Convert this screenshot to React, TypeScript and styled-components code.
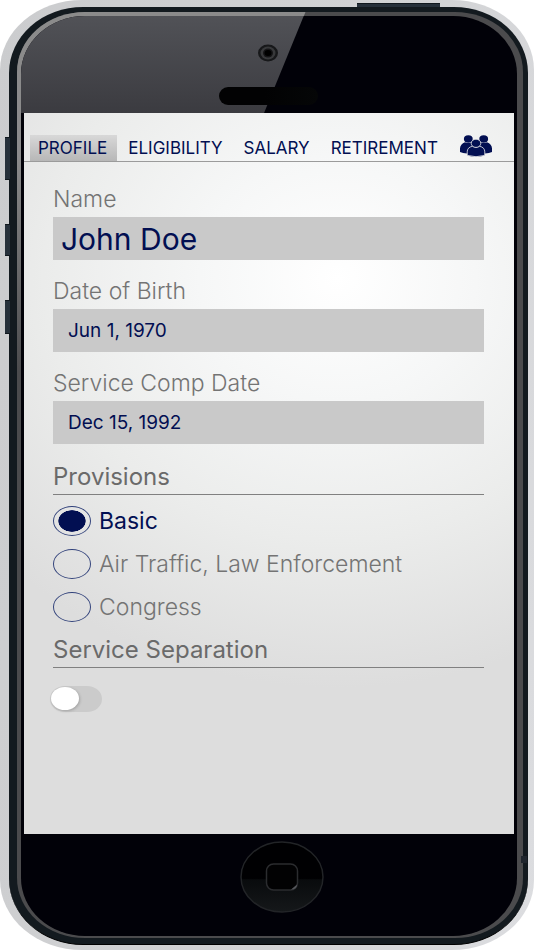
import React, { useState } from "react";
import styled, { createGlobalStyle } from "styled-components";

const navy = "#020f52";
const grey = "#747474";

const GlobalStyle = createGlobalStyle`
  *, *::before, *::after { box-sizing: border-box; }
  body { margin: 0; background: #fff; font-family: Inter, "Liberation Sans", sans-serif; }
  button, input { font: inherit; }
`;

const Shell = styled.main`
  position: relative;
  display: flex;
  min-height: 100vh;
  padding: 7px 6px 5px 9px;
  border-radius: 82px / 70px;
  background: linear-gradient(100deg, #cbccce, #d2d3d5 60%, #dcdde0);
`;

const Band = styled.div`
  display: flex;
  flex: 1;
  min-width: 0;
  padding: 5px 5px 6px 8px;
  border-radius: 74px / 66px;
  background: #131a1f;
  border-bottom: 1px solid #000;
`;

const Rail = styled.div`
  position: relative;
  display: flex;
  flex: 1;
  min-width: 0;
  padding: 4px 6px 2px 4px;
  border-radius: 68px / 60px;
  background: #4b4b4d;
  overflow: hidden;

  &::before {
    content: "";
    position: absolute;
    inset: 0 0 auto 0;
    height: 360px;
    background: linear-gradient(#8b8b8b 40%, transparent);
    clip-path: polygon(0 0, 57% 0, 30% 100%, 0 100%);
  }
`;

const Face = styled.div`
  position: relative;
  display: flex;
  flex: 1;
  flex-direction: column;
  min-width: 0;
  border-radius: 64px / 58px;
  background: #010108;
  overflow: hidden;
`;

const Forehead = styled.div`
  position: relative;
  display: flex;
  flex-direction: column;
  align-items: center;
  gap: 25px;
  height: 97px;
  padding: 28px 2px 0 0;

  &::before {
    content: "";
    position: absolute;
    inset: 0;
    background: linear-gradient(#515257, #3b3b40);
    clip-path: polygon(0 0, 57% 0, 49% 100%, 0 100%);
  }
`;

const Camera = styled.svg`
  position: relative;
  width: 20px;
  height: 18px;
  flex: none;
`;

const Speaker = styled.div`
  position: relative;
  width: 99px;
  height: 18px;
  border-radius: 9px;
  background: linear-gradient(90deg, #020203 45%, #050607);
`;

const Screen = styled.div`
  flex: 1;
  margin: 0 3px;
  background: radial-gradient(460px 410px at 64% 165px, #fff 0, #f6f7f7 30%, #ebeceb 64%, #ddd 100%);
`;

const Tabs = styled.nav`
  display: flex;
  align-items: flex-end;
  gap: 3px;
  height: 49px;
  padding: 0 18px 0 6px;
  border-bottom: 1px solid #9b9b9b;
`;

const Tab = styled.button<{ $active: boolean }>`
  height: 26px;
  padding: 0 10px 0 8px;
  border: 0;
  background: ${(p) => (p.$active ? "linear-gradient(#d8d8d8, #b7b7b7)" : "none")};
  color: ${navy};
  font-size: 17px;
  line-height: 24px;
  white-space: nowrap;
  cursor: pointer;
`;

const IconButton = styled.button`
  display: flex;
  padding: 0 4px;
  margin: 0 0 4px auto;
  border: 0;
  background: none;
  cursor: pointer;
`;

const Form = styled.form`
  display: flex;
  flex-direction: column;
  padding: 24px 30px 24px 29px;
`;

const Field = styled.div`
  display: flex;
  flex-direction: column;
  gap: 5px;
  margin-bottom: 18px;
`;

const Label = styled.label`
  color: ${grey};
  font-size: 23px;
  font-weight: 300;
  line-height: 26px;
`;

const TextInput = styled.input<{ $large?: boolean }>`
  width: 100%;
  height: 43px;
  padding: 0 ${(p) => (p.$large ? 8 : 15)}px;
  border: 0;
  border-radius: 0;
  background: #c9c9c9;
  color: ${navy};
  font-size: ${(p) => (p.$large ? 30 : 19)}px;
`;

const Group = styled.fieldset`
  min-width: 0;
  margin: 0 0 7px;
  padding: 0;
  border: 0;
`;

const Legend = styled.legend`
  width: 100%;
  margin-bottom: 4px;
  padding: 0 0 2px;
  border-bottom: 1px solid #808080;
  color: #6a6a6a;
  font-size: 24px;
  line-height: 30px;
`;

const Option = styled.label<{ $on: boolean }>`
  display: flex;
  align-items: center;
  gap: 8px;
  height: 43px;
  color: ${(p) => (p.$on ? navy : grey)};
  font-size: 23px;
  font-weight: ${(p) => (p.$on ? 400 : 300)};
  white-space: nowrap;
`;

const Radio = styled.input`
  appearance: none;
  flex: none;
  width: 38px;
  height: 30px;
  margin: 0;
  padding: 3px 4px;
  border: 1px solid #34447c;
  border-radius: 50%;

  &:checked {
    background: radial-gradient(closest-side, ${navy} 95%, transparent) content-box no-repeat;
  }
`;

const Switch = styled.input`
  appearance: none;
  width: 52px;
  height: 26px;
  margin: 14px 0 0 -3px;
  padding: 1px;
  border-radius: 15px / 13px;
  background: #cbcbcb;
  cursor: pointer;

  &::before {
    content: "";
    display: block;
    width: 28px;
    height: 23px;
    border-radius: 50%;
    background: #fff;
    box-shadow: 1px 1px 3px rgba(0, 0, 0, 0.2);
  }

  &:checked::before {
    margin-left: 22px;
  }
`;

const Chin = styled.div`
  display: flex;
  justify-content: center;
  height: 102px;
  padding: 6px 0 0 26px;
`;

const Home = styled.button`
  width: 86px;
  height: 74px;
  padding: 0;
  border: 0;
  background: none;
`;

const SideKey = styled.span<{ $top: number; $height: number }>`
  position: absolute;
  left: 5px;
  top: ${(p) => p.$top}px;
  width: 5px;
  height: ${(p) => p.$height}px;
  border-top: 1px solid #11181e;
  border-bottom: 1px solid #11181e;
  background: #26303a;
`;

const PowerKey = styled.span`
  position: absolute;
  top: 3px;
  right: 94px;
  width: 83px;
  height: 4px;
  border-top: 1px solid #11181e;
  background: #26303a;
`;

const Notch = styled.span`
  position: absolute;
  right: 7px;
  bottom: 87px;
  width: 6px;
  height: 7px;
  background: #20262e;
`;

const PeopleIcon = () => (
  <svg width="32" height="22" viewBox="0 0 32 22" fill={navy} aria-hidden="true">
    <ellipse cx="8.3" cy="4" rx="4.4" ry="3.7" />
    <ellipse cx="23.7" cy="4" rx="4.4" ry="3.7" />
    <path d="M0 17V13.5C0 10.5 2 8.4 5 7.2q3.3 1.8 6.6 0L15 11v6.5Q5 19.6 0 17Z" />
    <path d="M32 17V13.5c0-3-2-5.1-5-6.3q-3.3 1.8-6.6 0L17 11v6.5q10 2.1 15-.5Z" />
    <g stroke="#eeeeee" strokeWidth="0.8">
      <path d="M7.2 20.4v-3.5c0-3 2-5.1 5-5.5q3.8 1.7 7.6 0c3 .4 5 2.500 5 5.500v3.500Q16 23 7.200 20.400Z" />
      <ellipse cx="16" cy="8.3" rx="4.8" ry="4.1" />
    </g>
  </svg>
);

const HomeDrawing = () => (
  <svg width="86" height="74" viewBox="0 0 86 74" aria-hidden="true">
    <defs>
      <linearGradient id="homeShade" x1="0" y1="0" x2="0" y2="1">
        <stop offset="0.52" stopColor="#000002" />
        <stop offset="0.54" stopColor="#090b0d" />
        <stop offset="1" stopColor="#15181a" />
      </linearGradient>
    </defs>
    <ellipse cx="43" cy="37" rx="41" ry="35" fill="url(#homeShade)" stroke="#222427" strokeWidth="1.5" />
    <rect x="27.5" y="24" width="31" height="26" rx="7" fill="#020203" stroke="#2b2c2f" strokeWidth="1.5" />
    <path d="M52 49.5 58 44.5q0 5-6 5Z" fill="#55575b" />
  </svg>
);

const tabNames = ["PROFILE", "ELIGIBILITY", "SALARY", "RETIREMENT"];
const provisions = ["Basic", "Air Traffic, Law Enforcement", "Congress"];
const fields = [
  { id: "name", label: "Name", value: "John Doe", large: true },
  { id: "birth", label: "Date of Birth", value: "Jun 1, 1970", large: false },
  { id: "service", label: "Service Comp Date", value: "Dec 15, 1992", large: false },
];

export default function App() {
  const [tab, setTab] = useState("PROFILE");
  const [provision, setProvision] = useState("Basic");

  return (
    <>
      <GlobalStyle />
      <Shell>
        <SideKey $top={137} $height={43} />
        <SideKey $top={224} $height={32} />
        <SideKey $top={300} $height={34} />
        <PowerKey />
        <Band>
          <Rail>
            <Face>
              <Forehead>
                <Camera viewBox="0 0 20 18" aria-hidden="true">
                  <ellipse cx="10" cy="9" rx="10" ry="8.5" fill="#17181a" />
                  <ellipse cx="10" cy="9" rx="7.5" ry="6.5" fill="#38393b" />
                  <ellipse cx="10" cy="9" rx="5" ry="4.5" fill="#151517" />
                  <ellipse cx="10" cy="9" rx="3.5" ry="3" fill="#000" />
                </Camera>
                <Speaker />
              </Forehead>
              <Screen>
                <Tabs aria-label="Sections">
                  {tabNames.map((name) => (
                    <Tab key={name} type="button" $active={name === tab} onClick={() => setTab(name)}>
                      {name}
                    </Tab>
                  ))}
                  <IconButton type="button" aria-label="People">
                    <PeopleIcon />
                  </IconButton>
                </Tabs>
                <Form>
                  {fields.map((f) => (
                    <Field key={f.id}>
                      <Label htmlFor={f.id}>{f.label}</Label>
                      <TextInput id={f.id} type="text" defaultValue={f.value} $large={f.large} />
                    </Field>
                  ))}
                  <Group>
                    <Legend>Provisions</Legend>
                    {provisions.map((name) => (
                      <Option key={name} $on={name === provision}>
                        <Radio
                          type="radio"
                          name="provision"
                          checked={name === provision}
                          onChange={() => setProvision(name)}
                        />
                        {name}
                      </Option>
                    ))}
                  </Group>
                  <Group>
                    <Legend>Service Separation</Legend>
                    <Switch type="checkbox" role="switch" aria-label="Service Separation" />
                  </Group>
                </Form>
              </Screen>
              <Chin>
                <Home type="button" aria-label="Home">
                  <HomeDrawing />
                </Home>
              </Chin>
            </Face>
          </Rail>
        </Band>
        <Notch />
      </Shell>
    </>
  );
}
